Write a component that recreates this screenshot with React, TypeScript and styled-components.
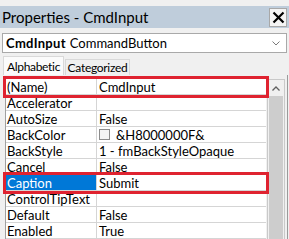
import React from 'react';
import styled, { createGlobalStyle } from 'styled-components';

const GlobalStyle = createGlobalStyle`
  html, body {
    margin: 0;
    padding: 0;
    background: #f0f0f0;
  }
  * {
    box-sizing: border-box;
  }
`;

const properties = [
  { name: '(Name)', value: 'CmdInput', marked: true },
  { name: 'Accelerator', value: '' },
  { name: 'AutoSize', value: 'False' },
  { name: 'BackColor', value: '&H8000000F&', swatch: true },
  { name: 'BackStyle', value: '1 - fmBackStyleOpaque' },
  { name: 'Cancel', value: 'False' },
  { name: 'Caption', value: 'Submit', marked: true, selected: true },
  { name: 'ControlTipText', value: '' },
  { name: 'Default', value: 'False' },
  { name: 'Enabled', value: 'True' },
];

const Window = styled.div`
  width: 289px;
  height: 239px;
  overflow: hidden;
  background: #f0f0f0;
  padding-top: 6px;
  font-family: Lato, "Noto Sans", sans-serif;
  color: #000;
`;

const TitleBar = styled.div`
  height: 22px;
  background: #bfcddb;
  display: flex;
  align-items: center;
  justify-content: space-between;
  padding: 0 2px 0 2px;
`;

const Title = styled.span`
  font-size: 15px;
`;

const CloseButton = styled.div`
  width: 18px;
  height: 19px;
  background: #f4f4f4;
  border: 1px solid #a8a8a8;
  display: flex;
  align-items: center;
  justify-content: center;
`;

const ObjectSelect = styled.div`
  margin: 5px 2px 0 2px;
  height: 20px;
  background: #fff;
  border: 1px solid #a9a9a9;
  display: flex;
  align-items: center;
  padding: 0 6px 0 3px;
  font-size: 13px;
`;

const ObjectName = styled.span`
  font-weight: 700;
  margin-right: 4px;
  letter-spacing: 0.3px;
`;

const ObjectType = styled.span`
  flex: 1;
`;

const Tabs = styled.div`
  margin: 3px 0 0 3px;
  height: 19px;
  display: flex;
  align-items: flex-end;
`;

const Tab = styled.div<{ $active?: boolean }>`
  width: ${p => (p.$active ? 61 : 65)}px;
  height: ${p => (p.$active ? 19 : 16)}px;
  display: flex;
  align-items: center;
  justify-content: center;
  font-size: 12px;
  letter-spacing: -0.3px;
  background: ${p => (p.$active ? '#fbfbfb' : '#f0f0f0')};
  border: 1px solid #d9d9d9;
  border-bottom: none;
  margin-left: ${p => (p.$active ? 0 : 1)}px;
`;

const Panel = styled.div`
  display: flex;
  margin: 0 1px 0 5px;
  padding-top: 4px;
  border-right: 1px solid #9a9a9a;
  height: 164px;
`;

const Grid = styled.div`
  width: 262px;
  border-left: 1px solid #a0a0a0;
`;

const Row = styled.div<{ $marked?: boolean }>`
  display: flex;
  height: 16px;
  outline: ${p => (p.$marked ? '3px solid #df2330' : 'none')};
  position: relative;
  z-index: ${p => (p.$marked ? 1 : 0)};
`;

const NameCell = styled.div<{ $selected?: boolean }>`
  width: 91px;
  padding-left: 1px;
  display: flex;
  align-items: center;
  font-size: 13px;
  white-space: nowrap;
  background: ${p => (p.$selected ? '#0078d7' : '#fff')};
  color: ${p => (p.$selected ? '#fff' : '#000')};
  border-bottom: 1px solid #d5d5d5;
  border-right: 1px solid #d5d5d5;
`;

const ValueCell = styled.div`
  flex: 1;
  padding-left: 2px;
  display: flex;
  align-items: center;
  font-size: 13px;
  white-space: nowrap;
  background: #fff;
  border-bottom: 1px solid #d5d5d5;
`;

const Swatch = styled.span`
  width: 11px;
  height: 11px;
  border: 1px solid #8c8c8c;
  background: #f4f4f4;
  margin-right: 6px;
`;

const ScrollBar = styled.div`
  width: 18px;
  margin-left: 1px;
  border: 1px solid #c9c9c9;
  border-bottom: none;
  display: flex;
  flex-direction: column;
  background: #f0f0f0;
  margin-right: 2px;
`;

const ScrollButton = styled.div`
  height: 16px;
  display: flex;
  align-items: center;
  justify-content: center;
`;

const Thumb = styled.div`
  flex: 1;
  margin: 0 1px;
  background: #cdcdcd;
`;

const App: React.FC = () => {
  return (
    <Window>
      <GlobalStyle />
      <TitleBar>
        <Title>Properties - CmdInput</Title>
        <CloseButton>
          <svg width="13" height="13" viewBox="0 0 13 13">
            <path d="M1.5 1.5 L11.5 11.5 M11.5 1.5 L1.5 11.5" stroke="#000" strokeWidth="2.2" />
          </svg>
        </CloseButton>
      </TitleBar>
      <ObjectSelect>
        <ObjectName>CmdInput</ObjectName>
        <ObjectType>CommandButton</ObjectType>
        <svg width="8" height="5" viewBox="0 0 8 5">
          <path d="M0.5 0.5 L4 4 L7.5 0.5" stroke="#7a7a7a" strokeWidth="1" fill="none" />
        </svg>
      </ObjectSelect>
      <Tabs>
        <Tab $active>Alphabetic</Tab>
        <Tab>Categorized</Tab>
      </Tabs>
      <Panel>
        <Grid>
          {properties.map(prop => (
            <Row key={prop.name} $marked={prop.marked}>
              <NameCell $selected={prop.selected}>{prop.name}</NameCell>
              <ValueCell>
                {prop.swatch && <Swatch />}
                {prop.value}
              </ValueCell>
            </Row>
          ))}
        </Grid>
        <ScrollBar>
          <ScrollButton>
            <svg width="8" height="5" viewBox="0 0 8 5">
              <path d="M0.5 4.5 L4 1 L7.5 4.5" stroke="#606060" strokeWidth="1.3" fill="none" />
            </svg>
          </ScrollButton>
          <Thumb />
        </ScrollBar>
      </Panel>
    </Window>
  );
};

export default App;
